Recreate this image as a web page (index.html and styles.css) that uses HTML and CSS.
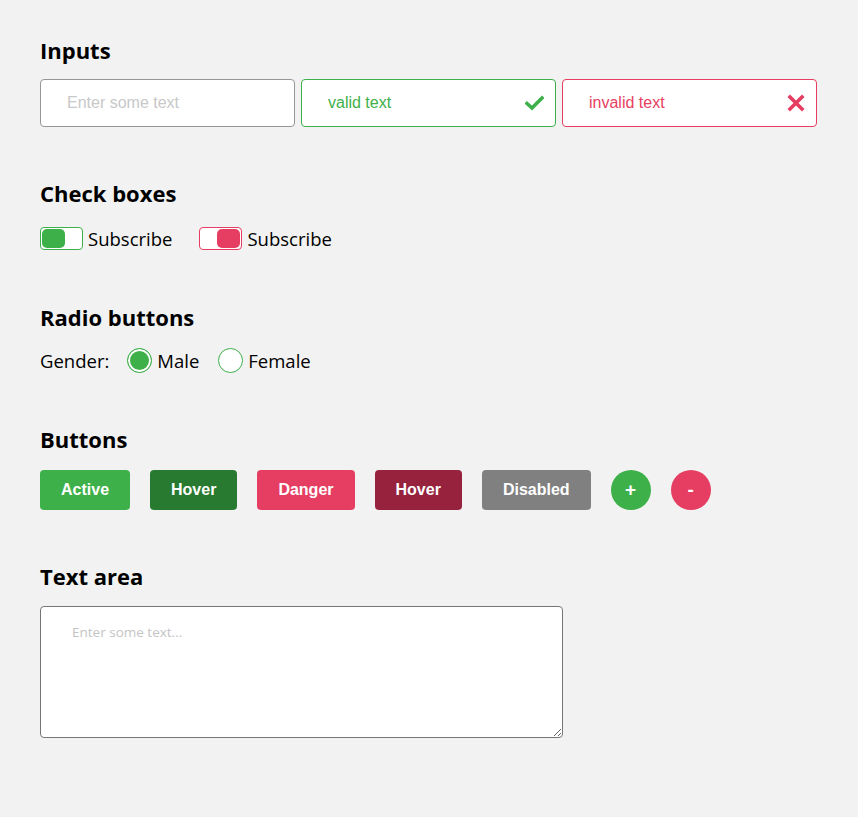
FILE: index.html
```html
<!DOCTYPE html>
<html lang="en">
<head>
<meta charset="utf-8">
<title>Form elements</title>
<link rel="stylesheet" href="styles.css">
</head>
<body>
<section class="section section-inputs">
  <h3 class="title">Inputs</h3>
  <div class="inputs">
    <div class="field">
      <input class="input" type="text" placeholder="Enter some text">
    </div>
    <div class="field">
      <input class="input input-valid" type="text" value="valid text">
      <svg class="field-icon" width="19" height="16" viewBox="0 0 19 16"><polyline points="2,8.5 7,13 17,3" fill="none" stroke="#3eb04a" stroke-width="3.6" stroke-linecap="square"/></svg>
    </div>
    <div class="field">
      <input class="input input-invalid" type="text" value="invalid text">
      <svg class="field-icon" width="18" height="18" viewBox="0 0 18 18"><path d="M3 3 L15 15 M15 3 L3 15" fill="none" stroke="#e63e62" stroke-width="3.6" stroke-linecap="square"/></svg>
    </div>
  </div>
</section>

<section class="section">
  <h3 class="title">Check boxes</h3>
  <div class="row toggles">
    <label class="toggle-label"><span class="toggle toggle-on"><span class="knob"></span></span>Subscribe</label>
    <label class="toggle-label"><span class="toggle toggle-danger"><span class="knob"></span></span>Subscribe</label>
  </div>
</section>

<section class="section">
  <h3 class="title">Radio buttons</h3>
  <div class="row radios">
    <span class="radio-caption">Gender:</span>
    <label class="radio-label"><span class="radio radio-checked"></span>Male</label>
    <label class="radio-label"><span class="radio"></span>Female</label>
  </div>
</section>

<section class="section section-buttons">
  <h3 class="title">Buttons</h3>
  <div class="buttons">
    <button class="btn btn-active">Active</button>
    <button class="btn btn-active-hover">Hover</button>
    <button class="btn btn-danger">Danger</button>
    <button class="btn btn-danger-hover">Hover</button>
    <button class="btn btn-disabled">Disabled</button>
    <button class="btn-round btn-active">+</button>
    <button class="btn-round btn-danger">-</button>
  </div>
</section>

<section class="section">
  <h3 class="title">Text area</h3>
  <textarea class="textarea" placeholder="Enter some text..."></textarea>
</section>
</body>
</html>
```

FILE: styles.css
```css
body {
  margin: 0;
  padding: 35px 41px 0 40px;
  background: #f2f2f2;
  color: #000;
  font-family: "Segoe UI", "Open Sans", sans-serif;
}

.section {
  margin-bottom: 50px;
}

.section-inputs,
.section-buttons {
  margin-bottom: 51px;
}

.title {
  margin: 0 0 14px;
  font-size: 22px;
  line-height: 30px;
  font-weight: 700;
}

/* Inputs */
.inputs {
  display: flex;
  gap: 6px;
}

.field {
  flex: 1;
  position: relative;
  height: 48px;
}

.input {
  display: block;
  width: 100%;
  height: 100%;
  box-sizing: border-box;
  margin: 0;
  padding: 0 44px 0 26px;
  border: 1px solid #969696;
  border-radius: 4px;
  background: #fff;
  font: 16px "Liberation Sans", Arial, sans-serif;
  color: #222;
  outline: none;
}

.input::placeholder {
  color: #c8c8c8;
}

.input-valid {
  border-color: #3eb04a;
  color: #3eb04a;
}

.input-invalid {
  border-color: #e63e62;
  color: #e63e62;
}

.field-icon {
  position: absolute;
  right: 12px;
  top: 50%;
  transform: translateY(-50%);
}

/* Rows */
.row {
  display: flex;
  align-items: center;
  height: 28px;
  font-size: 18.5px;
}

.toggles {
  padding-top: 2px;
}

.toggle-label {
  display: flex;
  align-items: center;
  gap: 5px;
  margin-right: 27px;
}

.toggle {
  display: flex;
  box-sizing: border-box;
  width: 43px;
  height: 23px;
  padding: 1px;
  border: 1px solid #3eb04a;
  border-radius: 4px;
  background: #fff;
}

.knob {
  width: 23px;
  height: 19px;
  border-radius: 5px;
  background: #3eb04a;
}

.toggle-danger {
  border-color: #e63e62;
  justify-content: flex-end;
}

.toggle-danger .knob {
  background: #e63e62;
}

.radio-caption {
  margin-right: 18px;
}

.radio-label {
  display: flex;
  align-items: center;
  gap: 5px;
  margin-right: 19px;
}

.radio {
  box-sizing: border-box;
  width: 25px;
  height: 25px;
  border: 1px solid #3eb04a;
  border-radius: 50%;
  background: #fff;
}

.radio-checked {
  background: #3eb04a;
  box-shadow: inset 0 0 0 2px #fff;
}

/* Buttons */
.buttons {
  display: flex;
  gap: 20px;
  padding-top: 2px;
}

.btn,
.btn-round {
  height: 40px;
  margin: 0;
  border: none;
  color: #fff;
  font: 700 16px "Liberation Sans", Arial, sans-serif;
  cursor: pointer;
}

.btn {
  padding: 0 21px;
  border-radius: 4px;
}

.btn-round {
  width: 40px;
  padding: 0;
  border-radius: 50%;
  font-size: 19px;
}

.btn-active { background: #3eb04a; }
.btn-active-hover { background: #277a2f; }
.btn-danger { background: #e63e62; }
.btn-danger-hover { background: #96223e; }
.btn-disabled { background: #808080; }

/* Textarea */
.textarea {
  display: block;
  box-sizing: border-box;
  width: 523px;
  height: 132px;
  margin: 15px 0 0;
  padding: 16px 31px;
  border: 1px solid #767676;
  border-radius: 4px;
  background: #fff;
  font-family: "Segoe UI", "Open Sans", sans-serif;
  font-size: 13.5px;
  outline: none;
}

.textarea::placeholder {
  color: #c4c4c4;
}
```
